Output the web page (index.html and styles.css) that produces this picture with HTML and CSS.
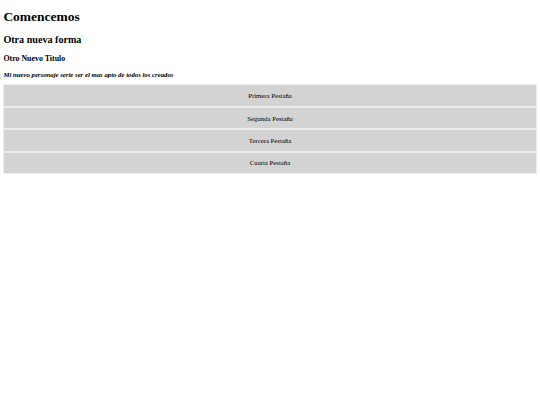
FILE: index.html
```html
<!DOCTYPE html>
<html lang="es">
<head>
<meta charset="utf-8">
<title>Comencemos</title>
<link rel="stylesheet" href="styles.css">
</head>
<body class="page">
  <h1 class="title">Comencemos</h1>
  <h2 class="subtitle">Otra nueva forma</h2>
  <h3 class="minor">Otro Nuevo Titulo</h3>
  <p class="note"><b><i>Mi nuevo personaje serie ser el mas apto de todos los creados</i></b></p>
  <div class="tabs">
    <div class="tab">Primera Pestaña</div>
    <div class="tab">Segunda Pestaña</div>
    <div class="tab">Tercera Pestaña</div>
    <div class="tab">Cuarta Pestaña</div>
  </div>
</body>
</html>
```

FILE: styles.css
```css
html {
  background: #ffffff;
}
.page {
  margin: 3.375px;
  font-family: "Liberation Serif", "Times New Roman", serif;
  font-size: 6.75px;
  color: #000000;
}
.title {
  font-size: 13.5px;
  font-weight: bold;
  margin: 6px 0 9.05px;
}
.subtitle {
  font-size: 10.125px;
  font-weight: bold;
  margin: 8.4px 0;
}
.minor {
  font-size: 7.9px;
  font-weight: bold;
  margin: 7.9px 0;
}
.note {
  font-size: 6.75px;
  margin: 6.75px 0;
}
.tabs {
  display: flex;
  flex-direction: column;
}
.tab {
  background: #d3d3d3;
  border: 1px solid #ececec;
  padding: 6.7px 0;
  text-align: center;
  font-size: 6.75px;
}
```
